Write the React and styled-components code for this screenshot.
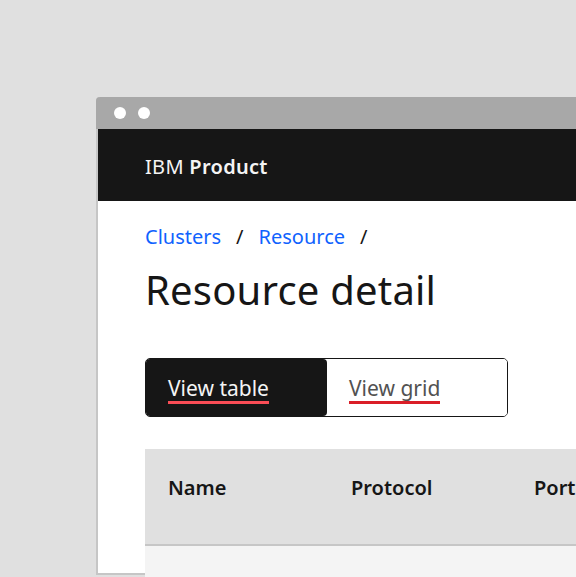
import React from "react";
import styled, { createGlobalStyle } from "styled-components";

const GlobalStyle = createGlobalStyle`
  html, body {
    margin: 0;
    padding: 0;
    background: #e0e0e0;
    overflow: hidden;
  }
  body {
    font-family: "Noto Sans", "Open Sans", sans-serif;
  }
`;

const Page = styled.div`
  width: 576px;
  height: 577px;
  padding: 97px 0 0 96px;
  box-sizing: border-box;
  overflow: hidden;
`;

const Window = styled.div`
  width: 700px;
  height: 478px;
  border: 2px solid #c6c6c6;
  border-top: none;
  border-radius: 4px 4px 0 0;
  background: #ffffff;
  display: flex;
  flex-direction: column;
  box-sizing: border-box;
`;

const TitleBar = styled.div`
  height: 32px;
  margin: 0 -2px;
  background: #a8a8a8;
  border-radius: 4px 4px 0 0;
  display: flex;
  align-items: center;
  gap: 12px;
  padding-left: 18px;
  flex-shrink: 0;
`;

const Dot = styled.span`
  width: 12px;
  height: 12px;
  border-radius: 50%;
  background: #ffffff;
`;

const Header = styled.header`
  height: 72px;
  background: #161616;
  color: #f4f4f4;
  display: flex;
  align-items: center;
  padding: 2px 0 0 47px;
  box-sizing: border-box;
  font-size: 20px;
  flex-shrink: 0;
`;

const Brand = styled.span`
  letter-spacing: 0.3px;
  b {
    font-weight: 600;
  }
`;

const Content = styled.main`
  padding: 22px 0 0 47px;
  display: flex;
  flex-direction: column;
`;

const Breadcrumb = styled.nav`
  display: flex;
  align-items: center;
  gap: 15px;
  font-size: 20px;
  line-height: 28px;
`;

const Crumb = styled.a`
  color: #0f62fe;
  text-decoration: none;
`;

const Slash = styled.span`
  color: #161616;
`;

const Title = styled.h1`
  margin: 13px 0 0;
  font-size: 40px;
  line-height: 52px;
  font-weight: 400;
  letter-spacing: 0.2px;
  color: #161616;
`;

const Switcher = styled.div`
  margin-top: 42px;
  width: 363px;
  height: 59px;
  display: grid;
  grid-template-columns: 181px 1fr;
  border: 1px solid #161616;
  border-radius: 5px;
  overflow: hidden;
  box-sizing: border-box;
`;

const SwitchButton = styled.button`
  border: none;
  margin: 0;
  padding: 3px 0 0 22px;
  text-align: left;
  font-family: inherit;
  font-size: 21px;
  background: ${(p) => (p.$selected ? "#161616" : "#ffffff")};
  color: ${(p) => (p.$selected ? "#f4f4f4" : "#525252")};
  border-radius: ${(p) => (p.$selected ? "0 4px 4px 0" : "0")};
`;

const Label = styled.span`
  display: inline-block;
  border-bottom: 3px solid ${(p) => (p.$selected ? "#fa4d56" : "#da1e28")};
  line-height: 26px;
`;

const Table = styled.div`
  margin-top: 32px;
  display: flex;
  flex-direction: column;
`;

const HeadRow = styled.div`
  height: 97px;
  background: #e0e0e0;
  border-bottom: 2px solid #c6c6c6;
  display: grid;
  grid-template-columns: repeat(4, 183px);
  align-items: start;
  padding-top: 25px;
  box-sizing: border-box;
`;

const HeadCell = styled.div`
  padding-left: 23px;
  font-size: 20px;
  line-height: 28px;
  font-weight: 600;
  color: #161616;
`;

const BodyRow = styled.div`
  height: 40px;
  background: #f4f4f4;
`;

export default function App() {
  return (
    <Page>
      <GlobalStyle />
      <Window>
        <TitleBar>
          <Dot />
          <Dot />
        </TitleBar>
        <Header>
          <Brand>
            IBM <b>Product</b>
          </Brand>
        </Header>
        <Content>
          <Breadcrumb>
            <Crumb href="#">Clusters</Crumb>
            <Slash>/</Slash>
            <Crumb href="#">Resource</Crumb>
            <Slash>/</Slash>
          </Breadcrumb>
          <Title>Resource detail</Title>
          <Switcher>
            <SwitchButton $selected>
              <Label $selected>View table</Label>
            </SwitchButton>
            <SwitchButton>
              <Label>View grid</Label>
            </SwitchButton>
          </Switcher>
          <Table>
            <HeadRow>
              <HeadCell>Name</HeadCell>
              <HeadCell>Protocol</HeadCell>
              <HeadCell>Port</HeadCell>
            </HeadRow>
            <BodyRow />
          </Table>
        </Content>
      </Window>
    </Page>
  );
}
